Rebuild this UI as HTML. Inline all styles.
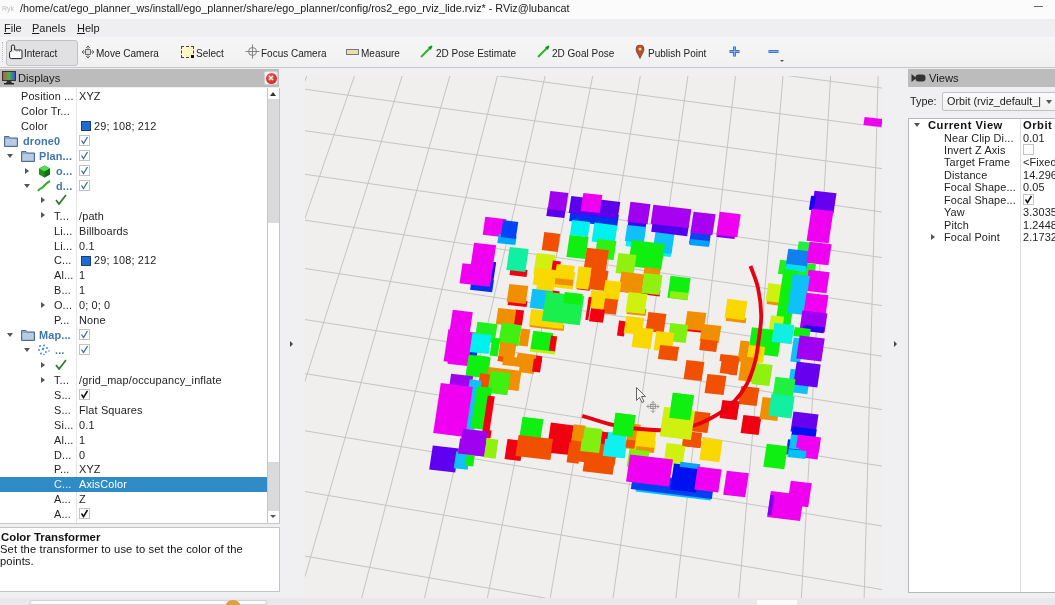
<!DOCTYPE html>
<html><head><meta charset="utf-8">
<style>
*{margin:0;padding:0;box-sizing:border-box}
html,body{width:1055px;height:605px;overflow:hidden;background:#f0eff2;font-family:"Liberation Sans",sans-serif;color:#1e1e1e}
.a{position:absolute}
.t{position:absolute;white-space:nowrap;font-size:10.5px;line-height:15px}
.tl{position:absolute;white-space:nowrap;font-size:10.9px;letter-spacing:.15px;line-height:15px;color:#232323}
.blue{color:#3f76b0;font-weight:bold}
.tb{position:absolute;top:46px;font-size:10px;line-height:15px;white-space:nowrap;color:#222}
.cb{position:absolute;width:11px;height:11px;border:1px solid #c3c3c3;background:#fff}
.vt{position:absolute;white-space:nowrap;font-size:10.9px;letter-spacing:.12px;line-height:12px;color:#232323}
.tri-d{width:0;height:0;border-left:3.5px solid transparent;border-right:3.5px solid transparent;border-top:4px solid #555}
.tri-r{width:0;height:0;border-top:3.5px solid transparent;border-bottom:3.5px solid transparent;border-left:4px solid #555}
#wrap{position:absolute;left:0;top:0;width:1055px;height:605px;will-change:transform}
</style></head><body><div id="wrap">
<!-- title -->
<div class="a" style="left:0;top:0;width:1055px;height:19px;background:#fbfbfb"></div>
<svg class="a" style="left:2px;top:3px" width="13" height="11" viewBox="0 0 13 11"><text x="0" y="8" font-size="7" fill="#bbb" font-family="Liberation Sans">Ryk</text></svg>
<div class="t" style="left:20px;top:1px;font-size:10.8px;line-height:14px;color:#1a1a1a">/home/cat/ego_planner_ws/install/ego_planner/share/ego_planner/config/ros2_ego_rviz_lide.rviz* - RViz@lubancat</div>
<div class="a" style="left:1034px;top:6px;width:9px;height:1.2px;background:#666"></div>
<!-- menu -->
<div class="a" style="left:0;top:19px;width:1055px;height:18px;background:#efeff1"></div>
<div class="t" style="left:4px;top:21px;font-size:11px;color:#1a1a1a"><u>F</u>ile</div>
<div class="t" style="left:32px;top:21px;font-size:11px;color:#1a1a1a"><u>P</u>anels</div>
<div class="t" style="left:77px;top:21px;font-size:11px;color:#1a1a1a"><u>H</u>elp</div>
<!-- toolbar -->
<div class="a" style="left:0;top:37px;width:1055px;height:31px;background:linear-gradient(#f6f6f7,#f1f1f2);border-bottom:1px solid #c6c6c9"></div>
<div class="a" style="left:2px;top:42px;width:1px;height:20px;border-left:1px dotted #bbb"></div>
<div class="a" style="left:6px;top:40px;width:72px;height:26px;background:#e1e1e3;border:1px solid #c2c2c4;border-radius:3px"></div>
<svg class="a" style="left:8px;top:44px" width="16" height="16" viewBox="0 0 16 16"><path d="M3.5,14.6H13Q14,14.6 14,13.6V7Q14,6 13,6H6.6V2.2Q6.6,1 5,1Q3.4,1 3.4,2.2V7.2Q1.6,7.2 1.6,8.6V13Q1.6,14.6 3.5,14.6Z" fill="#fff" stroke="#222" stroke-width="1"/><path d="M9,6.2V8M11.5,6.2V8" stroke="#888" stroke-width="0.8"/><path d="M5,2.2V8" stroke="#bbb" stroke-width="0.8"/></svg>
<div class="tb" style="left:24px">Interact</div>
<svg class="a" style="left:81px;top:45px" width="14" height="14" viewBox="0 0 14 14" fill="none" stroke="#666" stroke-width="0.9"><path d="M7 1v12M1 7h12M7 1l-2 2M7 1l2 2M7 13l-2-2M7 13l2-2M1 7l2-2M1 7l2 2M13 7l-2-2M13 7l-2 2"/><rect x="4.5" y="4.5" width="5" height="5" fill="#ddd"/></svg>
<div class="tb" style="left:96px">Move Camera</div>
<div class="a" style="left:181px;top:46px;width:13px;height:12px;background:#fdf7c4;border:1px dashed #444"></div>
<div class="a" style="left:191px;top:55px;width:3px;height:3px;background:#111"></div>
<div class="tb" style="left:196px">Select</div>
<svg class="a" style="left:245px;top:44px" width="15" height="15" viewBox="0 0 15 15" fill="none" stroke="#777" stroke-width="0.9"><circle cx="7.5" cy="7.5" r="4"/><path d="M7.5 0.5v14M0.5 7.5h14"/></svg>
<div class="tb" style="left:261px">Focus Camera</div>
<div class="a" style="left:346px;top:49px;width:13px;height:6px;background:#e8e0a8;border:1px solid #777"></div>
<div class="tb" style="left:361px">Measure</div>
<svg class="a" style="left:420px;top:45px" width="13" height="13" viewBox="0 0 13 13"><path d="M1 12L12 1" stroke="#2db82d" stroke-width="2.2"/><path d="M8 2l4-1-1 4" fill="#1a8a1a"/></svg>
<div class="tb" style="left:436px">2D Pose Estimate</div>
<svg class="a" style="left:537px;top:45px" width="13" height="13" viewBox="0 0 13 13"><path d="M1 12L12 1" stroke="#2db82d" stroke-width="2.2"/><path d="M8 2l4-1-1 4" fill="#1a8a1a"/></svg>
<div class="tb" style="left:552px">2D Goal Pose</div>
<svg class="a" style="left:635px;top:44px" width="10" height="15" viewBox="0 0 10 15"><path d="M5 14.5C3 10 1 8 1 5a4 4 0 0 1 8 0c0 3-2 5-4 9.5z" fill="#b5502a" stroke="#7a2e14" stroke-width="0.6"/><circle cx="5" cy="5" r="1.5" fill="#f3d8c8"/></svg>
<div class="tb" style="left:648px">Publish Point</div>
<svg class="a" style="left:728px;top:45px" width="13" height="13" viewBox="0 0 13 13"><path d="M6.5 1.5v10M1.5 6.5h10" stroke="#3b73c4" stroke-width="3"/><path d="M6.5 1.5v10M1.5 6.5h10" stroke="#7fb0ee" stroke-width="1.2"/></svg>
<svg class="a" style="left:767px;top:45px" width="13" height="13" viewBox="0 0 13 13"><path d="M1.5 6.5h10" stroke="#3b73c4" stroke-width="3"/><path d="M1.5 6.5h10" stroke="#7fb0ee" stroke-width="1.2"/></svg>
<div class="a tri-d" style="left:780px;top:60px;border-width:2.5px 2.5px 0 2.5px"></div>

<!-- displays panel -->
<div class="a" style="left:0;top:69px;width:279px;height:18px;background:#bcbcbc"></div>
<svg class="a" style="left:2px;top:71px" width="14" height="14" viewBox="0 0 14 14"><rect x="0.5" y="0.5" width="13" height="9" fill="url(#mon)" stroke="#333"/><defs><linearGradient id="mon"><stop offset="0" stop-color="#d44"/><stop offset=".5" stop-color="#4b4"/><stop offset="1" stop-color="#44d"/></linearGradient></defs><path d="M5 10h4l1 2h-6z" fill="#333"/><rect x="2" y="12" width="10" height="1.5" fill="#222"/></svg>
<div class="t" style="left:18px;top:70px;font-size:11.2px;line-height:16px;color:#1a1a1a">Displays</div>
<div class="a" style="left:264px;top:71px;width:14px;height:14px;background:#f4f4f4;border:1px solid #d0d0d0;border-radius:2px"></div>
<div class="a" style="left:265.5px;top:72.5px;width:11px;height:11px;border-radius:50%;background:radial-gradient(circle at 40% 35%,#f06060,#c01818)"></div>
<svg class="a" style="left:268px;top:75px" width="6" height="6" viewBox="0 0 6 6"><path d="M1 1l4 4M5 1l-4 4" stroke="#fff" stroke-width="1.2"/></svg>
<div class="a" style="left:0;top:88px;width:267px;height:435px;background:#fff"></div>
<div class="a" style="left:76px;top:88px;width:1px;height:435px;background:#e4e4e4"></div>
<div class="tl" style="left:21px;top:89.2px">Position ...</div>
<div class="tl" style="left:79px;top:89.2px">XYZ</div>
<div class="tl" style="left:21px;top:104.1px">Color Tr...</div>
<div class="tl" style="left:21px;top:119.1px">Color</div>
<div class="a" style="left:81px;top:121.3px;width:10px;height:10px;background:#1d6cd4;border:1px solid #1a3f70"></div>
<div class="tl" style="left:94px;top:119.1px">29; 108; 212</div>
<svg class="a" style="left:4px;top:134.7px" width="14" height="12" viewBox="0 0 14 12"><path d="M0.5 1.5h4.5l1.2 1.5h7.3v8.5h-13z" fill="#8fa7c7" stroke="#4f6a94" stroke-width="1"/><rect x="1.5" y="4" width="11" height="6.5" fill="#b9cbe3"/></svg>
<div class="tl blue" style="left:23px;top:134.0px">drone0</div>
<div class="cb" style="left:79px;top:135.2px"><svg width="9" height="9" viewBox="0 0 9 9" style="position:absolute;left:0;top:0"><path d="M1.5 4.5l2 3l4-6.5" stroke="#3a6ea5" stroke-width="1.3" fill="none"/></svg></div>
<div class="a tri-d" style="left:6.5px;top:154.1px"></div>
<svg class="a" style="left:21px;top:149.6px" width="14" height="12" viewBox="0 0 14 12"><path d="M0.5 1.5h4.5l1.2 1.5h7.3v8.5h-13z" fill="#8fa7c7" stroke="#4f6a94" stroke-width="1"/><rect x="1.5" y="4" width="11" height="6.5" fill="#b9cbe3"/></svg>
<div class="tl blue" style="left:39px;top:148.9px">Plan...</div>
<div class="cb" style="left:79px;top:150.1px"><svg width="9" height="9" viewBox="0 0 9 9" style="position:absolute;left:0;top:0"><path d="M1.5 4.5l2 3l4-6.5" stroke="#3a6ea5" stroke-width="1.3" fill="none"/></svg></div>
<div class="a tri-r" style="left:25px;top:167.6px"></div>
<svg class="a" style="left:38px;top:164.6px" width="13" height="13" viewBox="0 0 13 13"><path d="M6.5 0.5l5.5 3v6l-5.5 3l-5.5-3v-6z" fill="#1f8f1f"/><path d="M6.5 0.5l5.5 3l-5.5 3l-5.5-3z" fill="#4fe04f"/><path d="M6.5 6.5v6l5.5-3v-6z" fill="#137013"/></svg>
<div class="tl blue" style="left:56px;top:163.9px">o...</div>
<div class="cb" style="left:79px;top:165.1px"><svg width="9" height="9" viewBox="0 0 9 9" style="position:absolute;left:0;top:0"><path d="M1.5 4.5l2 3l4-6.5" stroke="#3a6ea5" stroke-width="1.3" fill="none"/></svg></div>
<div class="a tri-d" style="left:23.5px;top:184.0px"></div>
<svg class="a" style="left:37px;top:179.5px" width="14" height="12" viewBox="0 0 14 12"><path d="M1 11c2-3 3-2 5-4s3-4 7-6" stroke="#30b030" stroke-width="2" fill="none"/></svg>
<div class="tl blue" style="left:56px;top:178.8px">d...</div>
<div class="cb" style="left:79px;top:180.0px"><svg width="9" height="9" viewBox="0 0 9 9" style="position:absolute;left:0;top:0"><path d="M1.5 4.5l2 3l4-6.5" stroke="#3a6ea5" stroke-width="1.3" fill="none"/></svg></div>
<div class="a tri-r" style="left:41px;top:197.4px"></div>
<svg class="a" style="left:55px;top:194.4px" width="12" height="11" viewBox="0 0 12 11"><path d="M1 6l3 4l7-9" stroke="#2e7d32" stroke-width="1.8" fill="none"/></svg>
<div class="a tri-r" style="left:41px;top:212.3px"></div>
<div class="tl" style="left:54px;top:208.60000000000002px">T...</div>
<div class="tl" style="left:79px;top:208.60000000000002px">/path</div>
<div class="tl" style="left:54px;top:223.60000000000002px">Li...</div>
<div class="tl" style="left:79px;top:223.60000000000002px">Billboards</div>
<div class="tl" style="left:54px;top:238.5px">Li...</div>
<div class="tl" style="left:79px;top:238.5px">0.1</div>
<div class="tl" style="left:54px;top:253.4px">C...</div>
<div class="a" style="left:81px;top:255.6px;width:10px;height:10px;background:#1d6cd4;border:1px solid #1a3f70"></div>
<div class="tl" style="left:94px;top:253.4px">29; 108; 212</div>
<div class="tl" style="left:54px;top:268.40000000000003px">Al...</div>
<div class="tl" style="left:79px;top:268.40000000000003px">1</div>
<div class="tl" style="left:54px;top:283.3px">B...</div>
<div class="tl" style="left:79px;top:283.3px">1</div>
<div class="a tri-r" style="left:41px;top:301.9px"></div>
<div class="tl" style="left:54px;top:298.2px">O...</div>
<div class="tl" style="left:79px;top:298.2px">0; 0; 0</div>
<div class="tl" style="left:54px;top:313.2px">P...</div>
<div class="tl" style="left:79px;top:313.2px">None</div>
<div class="a tri-d" style="left:6.5px;top:333.3px"></div>
<svg class="a" style="left:21px;top:328.8px" width="14" height="12" viewBox="0 0 14 12"><path d="M0.5 1.5h4.5l1.2 1.5h7.3v8.5h-13z" fill="#8fa7c7" stroke="#4f6a94" stroke-width="1"/><rect x="1.5" y="4" width="11" height="6.5" fill="#b9cbe3"/></svg>
<div class="tl blue" style="left:39px;top:328.1px">Map...</div>
<div class="cb" style="left:79px;top:329.3px"><svg width="9" height="9" viewBox="0 0 9 9" style="position:absolute;left:0;top:0"><path d="M1.5 4.5l2 3l4-6.5" stroke="#3a6ea5" stroke-width="1.3" fill="none"/></svg></div>
<div class="a tri-d" style="left:23.5px;top:348.2px"></div>
<svg class="a" style="left:37px;top:343.7px" width="14" height="12" viewBox="0 0 14 12" fill="#4a8ad0"><circle cx="3" cy="2" r="1"/><circle cx="7" cy="1.5" r="1"/><circle cx="2" cy="6" r="1"/><circle cx="6" cy="5" r="1.2"/><circle cx="10" cy="4" r="1"/><circle cx="4" cy="9.5" r="1"/><circle cx="9" cy="8" r="1"/><circle cx="12" cy="7" r="0.8"/><circle cx="7" cy="10.5" r="0.8"/></svg>
<div class="tl blue" style="left:55px;top:343.0px">...</div>
<div class="cb" style="left:79px;top:344.2px"><svg width="9" height="9" viewBox="0 0 9 9" style="position:absolute;left:0;top:0"><path d="M1.5 4.5l2 3l4-6.5" stroke="#3a6ea5" stroke-width="1.3" fill="none"/></svg></div>
<div class="a tri-r" style="left:41px;top:361.6px"></div>
<svg class="a" style="left:55px;top:358.6px" width="12" height="11" viewBox="0 0 12 11"><path d="M1 6l3 4l7-9" stroke="#2e7d32" stroke-width="1.8" fill="none"/></svg>
<div class="a tri-r" style="left:41px;top:376.6px"></div>
<div class="tl" style="left:54px;top:372.90000000000003px">T...</div>
<div class="tl" style="left:79px;top:372.90000000000003px">/grid_map/occupancy_inflate</div>
<div class="tl" style="left:54px;top:387.8px">S...</div>
<div class="cb" style="left:79px;top:389.0px"><svg width="9" height="9" viewBox="0 0 9 9" style="position:absolute;left:0;top:0"><path d="M1.5 4.5l2 3l4-6.5" stroke="#111" stroke-width="1.5" fill="none"/></svg></div>
<div class="tl" style="left:54px;top:402.7px">S...</div>
<div class="tl" style="left:79px;top:402.7px">Flat Squares</div>
<div class="tl" style="left:54px;top:417.7px">Si...</div>
<div class="tl" style="left:79px;top:417.7px">0.1</div>
<div class="tl" style="left:54px;top:432.6px">Al...</div>
<div class="tl" style="left:79px;top:432.6px">1</div>
<div class="tl" style="left:54px;top:447.5px">D...</div>
<div class="tl" style="left:79px;top:447.5px">0</div>
<div class="tl" style="left:54px;top:462.40000000000003px">P...</div>
<div class="tl" style="left:79px;top:462.40000000000003px">XYZ</div>
<div class="a" style="left:0;top:476.6px;width:267px;height:15px;background:#308cc6"></div>
<div class="tl" style="left:54px;top:477.40000000000003px;color:#e8f2fa">C...</div>
<div class="tl" style="left:79px;top:477.40000000000003px;color:#fff">AxisColor</div>
<div class="tl" style="left:54px;top:492.3px">A...</div>
<div class="tl" style="left:79px;top:492.3px">Z</div>
<div class="tl" style="left:54px;top:507.2px">A...</div>
<div class="cb" style="left:79px;top:508.4px"><svg width="9" height="9" viewBox="0 0 9 9" style="position:absolute;left:0;top:0"><path d="M1.5 4.5l2 3l4-6.5" stroke="#111" stroke-width="1.5" fill="none"/></svg></div>

<div class="a" style="left:0;top:523px;width:280px;height:1px;background:#c8c8c8"></div>
<!-- scrollbar -->
<div class="a" style="left:267px;top:88px;width:13px;height:435px;background:#fff;border-left:1px solid #c4c4c4;border-right:1px solid #c4c4c4"></div>
<div class="a" style="left:268px;top:99px;width:11px;height:124px;background:#dadadc"></div>
<div class="a" style="left:268px;top:462px;width:11px;height:49px;background:#dadadc"></div>
<div class="a" style="left:270px;top:92px;width:0;height:0;border-style:solid;border-width:0 3.5px 4px 3.5px;border-color:transparent transparent #333 transparent"></div>
<div class="a tri-d" style="left:270px;top:515px;border-width:3.5px 3px 0 3px"></div>
<!-- description -->
<div class="a" style="left:0;top:527px;width:280px;height:65px;background:#fff;border:1px solid #c4c4c4;border-left:none"></div>
<div class="t" style="left:1px;top:531px;font-size:11.4px;line-height:12px;font-weight:bold;color:#111">Color Transformer</div>
<div class="t" style="left:0px;top:543px;font-size:11.2px;letter-spacing:.12px;line-height:12px;color:#111">Set the transformer to use to set the color of the</div>
<div class="t" style="left:0px;top:555px;font-size:11.2px;letter-spacing:.12px;line-height:12px;color:#111">points.</div>
<!-- splitters -->
<div class="a tri-r" style="left:290px;top:341px;border-width:3px 0 3px 3.5px;border-color:transparent transparent transparent #444"></div>
<div class="a tri-r" style="left:894px;top:341px;border-width:3px 0 3px 3.5px;border-color:transparent transparent transparent #444"></div>
<!-- 3d view -->
<div class="a" style="left:305px;top:76px;width:577px;height:522px;background:#f0efee;overflow:hidden">
<svg width="577" height="522" style="position:absolute;left:0;top:0">
<g stroke="#c4c4c4" stroke-width="1" fill="none">
<line x1="-208.3" y1="-281.0" x2="-682.7" y2="494.8"/>
<line x1="-171.3" y1="-276.8" x2="-626.5" y2="505.3"/>
<line x1="-134.0" y1="-272.4" x2="-569.8" y2="515.8"/>
<line x1="-96.5" y1="-268.1" x2="-512.5" y2="526.5"/>
<line x1="-58.7" y1="-263.7" x2="-454.6" y2="537.3"/>
<line x1="-20.8" y1="-259.3" x2="-396.2" y2="548.2"/>
<line x1="17.5" y1="-254.9" x2="-337.2" y2="559.2"/>
<line x1="55.9" y1="-250.4" x2="-277.7" y2="570.3"/>
<line x1="94.6" y1="-246.0" x2="-217.5" y2="581.5"/>
<line x1="133.5" y1="-241.5" x2="-156.8" y2="592.9"/>
<line x1="172.7" y1="-236.9" x2="-95.4" y2="604.3"/>
<line x1="212.1" y1="-232.4" x2="-33.4" y2="615.9"/>
<line x1="251.7" y1="-227.8" x2="29.2" y2="627.6"/>
<line x1="291.6" y1="-223.1" x2="92.4" y2="639.3"/>
<line x1="331.8" y1="-218.5" x2="156.3" y2="651.3"/>
<line x1="372.2" y1="-213.8" x2="220.8" y2="663.3"/>
<line x1="412.9" y1="-209.1" x2="286.0" y2="675.5"/>
<line x1="453.8" y1="-204.4" x2="351.9" y2="687.7"/>
<line x1="495.0" y1="-199.6" x2="418.5" y2="700.2"/>
<line x1="536.5" y1="-194.8" x2="485.7" y2="712.7"/>
<line x1="578.2" y1="-190.0" x2="553.7" y2="725.4"/>
<line x1="620.2" y1="-185.1" x2="622.4" y2="738.2"/>
<line x1="662.4" y1="-180.2" x2="691.8" y2="751.1"/>
<line x1="705.0" y1="-175.3" x2="762.0" y2="764.2"/>
<line x1="747.8" y1="-170.3" x2="832.9" y2="777.5"/>
<line x1="790.9" y1="-165.3" x2="904.5" y2="790.8"/>
<line x1="-208.3" y1="-281.0" x2="834.3" y2="-160.3"/>
<line x1="-224.5" y1="-254.6" x2="838.9" y2="-129.0"/>
<line x1="-241.3" y1="-227.1" x2="843.7" y2="-96.3"/>
<line x1="-258.8" y1="-198.5" x2="848.8" y2="-62.2"/>
<line x1="-277.0" y1="-168.7" x2="854.1" y2="-26.5"/>
<line x1="-296.0" y1="-137.6" x2="859.6" y2="10.8"/>
<line x1="-315.8" y1="-105.2" x2="865.4" y2="49.9"/>
<line x1="-336.5" y1="-71.4" x2="871.5" y2="91.0"/>
<line x1="-358.2" y1="-36.0" x2="877.8" y2="134.0"/>
<line x1="-380.8" y1="1.1" x2="884.5" y2="179.3"/>
<line x1="-404.6" y1="39.9" x2="891.6" y2="227.0"/>
<line x1="-429.4" y1="80.6" x2="899.0" y2="277.3"/>
<line x1="-455.6" y1="123.3" x2="906.9" y2="330.3"/>
<line x1="-483.0" y1="168.2" x2="915.2" y2="386.4"/>
<line x1="-511.9" y1="215.5" x2="924.0" y2="445.8"/>
<line x1="-542.4" y1="265.3" x2="933.3" y2="508.8"/>
<line x1="-574.6" y1="317.9" x2="943.2" y2="575.8"/>
<line x1="-608.5" y1="373.5" x2="953.7" y2="647.0"/>
<line x1="-644.5" y1="432.4" x2="965.0" y2="723.1"/>
</g>
<polygon fill="#f000f0" points="559.6,40.9 577.6,43.1 576.4,51.1 558.4,48.9"/>
<polygon fill="#5c00ec" points="242.7,130.9 260.7,133.1 259.3,142.1 241.3,139.9"/>
<polygon fill="#a000f0" points="245.3,114.9 263.4,117.1 260.6,135.1 242.7,132.9"/>
<polygon fill="#f000f0" points="180.3,140.7 201.3,143.3 198.7,161.3 177.7,158.7"/>
<polygon fill="#00a8ff" points="193.7,157.9 211.7,160.1 210.3,169.1 192.3,166.9"/>
<polygon fill="#0044f8" points="198.3,144.1 213.3,145.9 210.7,162.9 195.7,161.1"/>
<polygon fill="#f05000" points="239.3,156.0 255.3,158.0 252.7,176.0 236.7,174.0"/>
<polygon fill="#0030f0" points="265.9,133.1 313.9,138.9 312.1,150.9 264.1,145.1"/>
<polygon fill="#00f0f0" points="267.1,143.9 285.1,146.1 282.9,161.1 264.9,158.9"/>
<polygon fill="#00f0f0" points="289.4,146.6 312.4,149.4 309.6,168.4 286.6,165.6"/>
<polygon fill="#5c00ec" points="266.3,120.1 315.3,125.9 312.7,142.9 263.7,137.1"/>
<polygon fill="#f000f0" points="278.4,116.9 297.4,119.1 294.6,137.1 275.6,134.9"/>
<polygon fill="#10f010" points="264.6,158.9 283.6,161.1 280.4,183.1 261.4,180.9"/>
<polygon fill="#30f010" points="292.4,162.9 311.4,165.1 308.6,184.1 289.6,181.9"/>
<polygon fill="#f05000" points="281.9,171.7 303.9,174.3 300.1,199.3 278.1,196.7"/>
<polygon fill="#f05000" points="287.3,195.5 296.3,196.5 293.7,213.5 284.7,212.5"/>
<polygon fill="#3010f0" points="323.5,143.9 341.5,146.1 340.5,153.1 322.5,150.9"/>
<polygon fill="#a000f0" points="325.5,125.8 345.5,128.2 342.5,148.2 322.5,145.8"/>
<polygon fill="#00f0f0" points="321.5,163.0 337.5,165.0 336.5,172.0 320.5,170.0"/>
<polygon fill="#10c0f8" points="322.2,148.9 341.2,151.1 338.8,167.1 319.8,164.9"/>
<polygon fill="#00f0f0" points="349.4,173.0 366.4,175.0 365.6,181.0 348.6,179.0"/>
<polygon fill="#10c0f8" points="350.5,155.9 369.5,158.1 366.5,178.1 347.5,175.9"/>
<polygon fill="#5000f0" points="347.8,144.8 383.8,149.2 382.2,160.2 346.2,155.8"/>
<polygon fill="#a800f0" points="348.4,128.7 386.4,133.3 383.6,152.3 345.6,147.7"/>
<polygon fill="#1040f0" points="386.0,154.8 406.0,157.2 404.0,170.2 384.0,167.8"/>
<polygon fill="#00a0ff" points="385.4,162.9 404.4,165.1 403.6,171.1 384.6,168.9"/>
<polygon fill="#a800f0" points="388.6,135.7 410.6,138.3 407.4,159.3 385.4,156.7"/>
<polygon fill="#8000f0" points="412.5,153.9 430.5,156.1 429.5,163.1 411.5,160.9"/>
<polygon fill="#f000f0" points="414.7,135.7 435.7,138.3 432.3,161.3 411.3,158.7"/>
<polygon fill="#10f010" points="326.9,164.0 359.9,168.0 356.1,194.0 323.1,190.0"/>
<polygon fill="#90f010" points="313.5,176.9 331.5,179.1 328.5,199.1 310.5,196.9"/>
<polygon fill="#f09000" points="339.5,191.0 355.5,193.0 354.5,200.0 338.5,198.0"/>
<polygon fill="#6800f0" points="509.5,114.7 531.5,117.3 528.5,137.3 506.5,134.7"/>
<polygon fill="#2000f0" points="506.1,119.7 511.1,120.3 508.9,134.3 503.9,133.7"/>
<polygon fill="#f000f0" points="506.4,132.7 528.4,135.3 523.6,167.3 501.6,164.7"/>
<polygon fill="#20f040" points="493.8,165.2 507.8,166.8 506.2,176.8 492.2,175.2"/>
<polygon fill="#20f020" points="475.1,183.8 511.1,188.2 508.9,202.2 472.9,197.8"/>
<polygon fill="#1080f0" points="483.3,172.7 504.3,175.3 501.7,192.3 480.7,189.7"/>
<polygon fill="#00e0f0" points="481.4,187.8 501.4,190.2 500.6,196.2 480.6,193.8"/>
<polygon fill="#f000f0" points="504.6,165.7 526.6,168.3 523.4,189.3 501.4,186.7"/>
<polygon fill="#f000f0" points="503.6,193.7 524.6,196.3 521.4,217.3 500.4,214.7"/>
<polygon fill="#2000f0" points="186.2,185.7 191.2,186.3 186.8,215.3 181.8,214.7"/>
<polygon fill="#0030f0" points="166.9,201.7 188.9,204.3 187.1,216.3 165.1,213.7"/>
<polygon fill="#f000f0" points="169.1,166.7 191.1,169.3 184.9,210.3 162.9,207.7"/>
<polygon fill="#f000f0" points="157.5,187.2 187.5,190.8 184.5,210.8 154.5,207.2"/>
<polygon fill="#f00010" points="205.5,192.0 222.5,194.0 221.5,201.0 204.5,199.0"/>
<polygon fill="#10f0a0" points="204.7,170.9 223.7,173.1 220.3,196.1 201.3,193.9"/>
<polygon fill="#d0f010" points="231.6,176.9 250.6,179.1 247.4,200.1 228.4,197.9"/>
<polygon fill="#f00010" points="247.9,184.5 255.9,185.5 254.1,197.5 246.1,196.5"/>
<polygon fill="#f8d800" points="230.3,191.6 270.3,196.4 267.7,213.4 227.7,208.6"/>
<polygon fill="#f09000" points="250.4,201.9 268.4,204.1 267.6,210.1 249.6,207.9"/>
<polygon fill="#f8d800" points="232.9,202.0 249.9,204.0 248.1,216.0 231.1,214.0"/>
<polygon fill="#f8d800" points="251.8,187.9 269.8,190.1 268.2,200.1 250.2,197.9"/>
<polygon fill="#f00010" points="272.4,207.2 285.4,208.8 284.6,214.8 271.6,213.2"/>
<polygon fill="#f8d800" points="273.6,190.2 286.6,191.8 283.4,213.8 270.4,212.2"/>
<polygon fill="#f00010" points="247.7,214.6 254.7,215.4 253.3,224.4 246.3,223.6"/>
<polygon fill="#f05000" points="286.5,193.0 303.5,195.0 300.5,215.0 283.5,213.0"/>
<polygon fill="#f00010" points="315.4,209.6 355.4,214.4 354.6,220.4 314.6,215.6"/>
<polygon fill="#f09000" points="316.5,195.6 339.5,198.4 336.5,218.4 313.5,215.6"/>
<polygon fill="#90f010" points="339.5,196.9 357.5,199.1 354.5,219.1 336.5,216.9"/>
<polygon fill="#10f010" points="365.6,199.8 385.6,202.2 382.4,224.2 362.4,221.8"/>
<polygon fill="#90f010" points="365.5,214.9 383.5,217.1 382.5,224.1 364.5,221.9"/>
<polygon fill="#f8d800" points="300.4,204.0 316.4,206.0 313.6,225.0 297.6,223.0"/>
<polygon fill="#f8d800" points="286.4,214.0 303.4,216.0 300.6,234.0 283.6,232.0"/>
<polygon fill="#f05000" points="300.1,222.2 313.1,223.8 310.9,238.8 297.9,237.2"/>
<polygon fill="#f00010" points="286.0,232.2 300.0,233.8 298.0,246.8 284.0,245.2"/>
<polygon fill="#f09000" points="322.5,230.9 341.5,233.1 340.5,240.1 321.5,237.9"/>
<polygon fill="#d0f010" points="323.5,215.9 342.5,218.1 339.5,238.1 320.5,235.9"/>
<polygon fill="#f00010" points="203.4,222.9 222.4,225.1 221.6,231.1 202.6,228.9"/>
<polygon fill="#f09000" points="204.3,207.9 223.3,210.1 220.7,228.1 201.7,225.9"/>
<polygon fill="#10c0f8" points="227.4,212.8 247.4,215.2 244.6,234.2 224.6,231.8"/>
<polygon fill="#f00010" points="283.7,220.8 286.7,221.2 283.3,244.2 280.3,243.8"/>
<polygon fill="#f09000" points="225.4,245.0 259.4,249.0 258.6,255.0 224.6,251.0"/>
<polygon fill="#f8d800" points="226.2,233.0 260.2,237.0 257.8,253.0 223.8,249.0"/>
<polygon fill="#19f050" points="241.2,215.7 279.2,220.3 274.8,249.3 236.8,244.7"/>
<polygon fill="#10f010" points="259.8,215.9 277.8,218.1 276.2,229.1 258.2,226.9"/>
<polygon fill="#f00010" points="210.1,233.5 219.1,234.5 216.9,249.5 207.9,248.5"/>
<polygon fill="#f09000" points="193.2,231.9 211.2,234.1 208.8,250.1 190.8,247.9"/>
<polygon fill="#f09000" points="462.4,222.1 477.4,223.9 476.6,229.9 461.6,228.1"/>
<polygon fill="#d0f010" points="463.4,207.1 478.4,208.9 475.6,226.9 460.6,225.1"/>
<polygon fill="#f09000" points="421.4,239.8 441.4,242.2 440.6,247.2 420.6,244.8"/>
<polygon fill="#f8d800" points="422.4,222.8 442.4,225.2 439.6,244.2 419.6,241.8"/>
<polygon fill="#f00010" points="381.3,250.9 400.3,253.1 399.7,257.1 380.7,254.9"/>
<polygon fill="#f09000" points="382.4,234.9 401.4,237.1 398.6,255.1 379.6,252.9"/>
<polygon fill="#f09000" points="397.3,247.9 416.3,250.1 413.7,267.1 394.7,264.9"/>
<polygon fill="#f05000" points="395.8,263.0 412.8,265.0 411.2,276.0 394.2,274.0"/>
<polygon fill="#f05000" points="343.4,235.9 361.4,238.1 358.6,257.1 340.6,254.9"/>
<polygon fill="#f00010" points="314.1,244.6 321.1,245.4 318.9,260.4 311.9,259.6"/>
<polygon fill="#f8d800" points="321.3,239.9 339.3,242.1 336.7,259.1 318.7,256.9"/>
<polygon fill="#f8d800" points="329.5,250.9 348.5,253.1 345.5,273.1 326.5,270.9"/>
<polygon fill="#80f010" points="365.4,246.9 383.4,249.1 380.6,267.1 362.6,264.9"/>
<polygon fill="#f8d800" points="351.4,254.9 369.4,257.1 366.6,276.1 348.6,273.9"/>
<polygon fill="#f05000" points="355.1,268.9 374.1,271.1 371.9,285.1 352.9,282.9"/>
<polygon fill="#f05000" points="415.5,277.9 433.5,280.1 432.5,287.1 414.5,284.9"/>
<polygon fill="#10f010" points="478.6,193.1 493.6,194.9 484.4,255.9 469.4,254.1"/>
<polygon fill="#10c0f8" points="487.9,198.0 504.9,200.0 499.1,239.0 482.1,237.0"/>
<polygon fill="#f000f0" points="501.5,216.7 523.5,219.3 520.5,239.3 498.5,236.7"/>
<polygon fill="#a000f0" points="497.4,234.5 522.4,237.5 519.6,256.5 494.6,253.5"/>
<polygon fill="#3000f0" points="498.4,248.7 519.5,251.3 518.5,257.3 497.6,254.7"/>
<polygon fill="#d0f010" points="466.1,239.2 479.1,240.8 476.9,255.8 463.9,254.2"/>
<polygon fill="#10f010" points="489.7,251.0 505.7,253.0 504.3,262.0 488.3,260.0"/>
<polygon fill="#10f010" points="446.9,251.2 476.9,254.8 473.1,280.8 443.1,277.2"/>
<polygon fill="#10f0e0" points="469.4,246.8 489.4,249.2 486.6,268.2 466.6,265.8"/>
<polygon fill="#f09000" points="435.6,264.5 444.6,265.5 441.4,286.5 432.4,285.5"/>
<polygon fill="#f8d800" points="444.2,269.0 460.2,271.0 457.8,287.0 441.8,285.0"/>
<polygon fill="#10c0f8" points="488.8,261.4 498.8,262.6 495.2,286.6 485.2,285.4"/>
<polygon fill="#a000f0" points="494.7,259.5 519.7,262.5 516.3,285.5 491.3,282.5"/>
<polygon fill="#f000f0" points="143.4,253.3 171.4,256.7 166.6,288.7 138.6,285.3"/>
<polygon fill="#f000f0" points="147.8,233.8 167.8,236.2 164.2,260.2 144.2,257.8"/>
<polygon fill="#0030f0" points="166.1,270.6 173.1,271.4 170.9,286.4 163.9,285.6"/>
<polygon fill="#20f020" points="172.4,245.8 192.4,248.2 189.6,267.2 169.6,264.8"/>
<polygon fill="#00f0f0" points="167.4,256.9 186.4,259.1 183.6,278.1 164.6,275.9"/>
<polygon fill="#40f010" points="196.6,246.8 216.6,249.2 213.4,270.2 193.4,267.8"/>
<polygon fill="#10f010" points="187.3,261.5 195.3,262.5 192.7,280.5 184.7,279.5"/>
<polygon fill="#f09000" points="216.3,252.5 225.3,253.5 222.7,270.5 213.7,269.5"/>
<polygon fill="#f09000" points="195.4,266.0 211.4,268.0 208.6,287.0 192.6,285.0"/>
<polygon fill="#c0f010" points="227.3,258.5 252.3,261.5 249.7,278.5 224.7,275.5"/>
<polygon fill="#10f010" points="228.3,254.8 248.3,257.2 245.7,275.2 225.7,272.8"/>
<polygon fill="#f00010" points="246.1,259.6 252.1,260.4 249.9,275.4 243.9,274.6"/>
<polygon fill="#f09000" points="212.6,276.8 232.6,279.2 231.4,287.2 211.4,284.8"/>
<polygon fill="#f00010" points="231.4,279.6 237.4,280.4 236.6,286.4 230.6,285.6"/>
<polygon fill="#10f010" points="172.4,279.3 183.4,280.7 182.6,286.7 171.6,285.3"/>
<polygon fill="#f000f0" points="143.6,279.7 165.6,282.3 164.4,290.3 142.4,287.7"/>
<polygon fill="#10f010" points="163.5,279.7 185.5,282.3 182.5,302.3 160.5,299.7"/>
<polygon fill="#10f010" points="164.5,278.7 185.5,281.3 182.5,301.3 161.5,298.7"/>
<polygon fill="#f05000" points="193.4,280.1 208.4,281.9 207.6,286.9 192.6,285.1"/>
<polygon fill="#f09000" points="198.7,279.9 216.7,282.1 215.3,291.1 197.3,288.9"/>
<polygon fill="#f09000" points="216.2,280.1 231.2,281.9 228.8,297.9 213.8,296.1"/>
<polygon fill="#f00010" points="229.0,282.5 237.0,283.5 235.0,296.5 227.0,295.5"/>
<polygon fill="#f09000" points="183.5,291.0 216.5,295.0 213.5,315.0 180.5,311.0"/>
<polygon fill="#f05000" points="175.1,297.3 187.1,298.7 184.9,312.7 172.9,311.3"/>
<polygon fill="#40f010" points="185.7,294.8 205.7,297.2 202.3,319.2 182.3,316.8"/>
<polygon fill="#a000f0" points="146.1,297.7 168.1,300.3 165.9,315.3 143.9,312.7"/>
<polygon fill="#10c0f8" points="164.7,303.3 176.7,304.7 169.3,353.7 157.3,352.3"/>
<polygon fill="#10f010" points="172.2,310.1 187.2,311.9 180.8,353.9 165.8,352.1"/>
<polygon fill="#f00010" points="182.8,319.6 189.8,320.4 184.2,357.4 177.2,356.6"/>
<polygon fill="#f000f0" points="135.8,307.1 167.8,310.9 160.2,360.9 128.2,357.1"/>
<polygon fill="#f00010" points="178.6,353.5 186.6,354.5 185.4,362.5 177.4,361.5"/>
<polygon fill="#a000f0" points="157.9,352.5 182.9,355.5 179.1,380.5 154.1,377.5"/>
<polygon fill="#90f010" points="181.4,362.3 193.4,363.7 190.6,382.7 178.6,381.3"/>
<polygon fill="#10f010" points="217.5,340.7 238.5,343.3 235.5,363.3 214.5,360.7"/>
<polygon fill="#f00010" points="245.9,346.6 268.9,349.4 265.1,374.4 242.1,371.6"/>
<polygon fill="#f00010" points="202.5,363.0 218.5,365.0 215.5,385.0 199.5,383.0"/>
<polygon fill="#f05000" points="213.6,358.9 248.6,363.1 245.4,384.1 210.4,379.9"/>
<polygon fill="#f09000" points="268.8,348.3 280.8,349.7 277.2,373.7 265.2,372.3"/>
<polygon fill="#80f010" points="279.8,351.0 296.8,353.0 293.2,377.0 276.2,375.0"/>
<polygon fill="#f00010" points="248.1,362.9 267.1,365.1 264.9,379.1 245.9,376.9"/>
<polygon fill="#f05000" points="264.5,366.3 276.5,367.7 273.5,387.7 261.5,386.3"/>
<polygon fill="#f05000" points="381.4,283.9 399.4,286.1 396.6,305.1 378.6,302.9"/>
<polygon fill="#f05000" points="417.3,280.0 434.3,282.0 431.7,299.0 414.7,297.0"/>
<polygon fill="#f05000" points="402.4,297.9 421.4,300.1 418.6,319.1 399.6,316.9"/>
<polygon fill="#f09000" points="436.8,280.2 450.8,281.8 447.2,305.8 433.2,304.2"/>
<polygon fill="#f05000" points="426.4,280.5 434.4,281.5 431.6,299.5 423.6,298.5"/>
<polygon fill="#90f010" points="449.6,286.9 467.6,289.1 464.4,310.1 446.4,307.9"/>
<polygon fill="#f05000" points="436.4,309.9 454.4,312.1 451.6,330.1 433.6,327.9"/>
<polygon fill="#f05000" points="436.3,310.4 446.3,311.6 443.7,328.6 433.7,327.4"/>
<polygon fill="#f00010" points="426.4,324.5 434.4,325.5 431.6,343.5 423.6,342.5"/>
<polygon fill="#f00010" points="417.4,324.0 434.4,326.0 431.6,344.0 414.6,342.0"/>
<polygon fill="#f00010" points="438.4,338.9 456.4,341.1 453.6,359.1 435.6,356.9"/>
<polygon fill="#d0f010" points="359.2,331.1 390.2,334.9 385.8,363.9 354.8,360.1"/>
<polygon fill="#f05000" points="387.5,334.9 405.5,337.1 402.5,357.1 384.5,354.9"/>
<polygon fill="#10f010" points="367.9,316.7 388.9,319.3 385.1,344.3 364.1,341.7"/>
<polygon fill="#f05000" points="379.1,354.9 397.1,357.1 394.9,372.1 376.9,369.9"/>
<polygon fill="#f8d800" points="397.6,361.8 417.6,364.2 414.4,386.2 394.4,383.8"/>
<polygon fill="#10f010" points="310.6,336.8 330.6,339.2 327.4,361.2 307.4,358.8"/>
<polygon fill="#f09000" points="323.9,347.3 335.9,348.7 332.1,373.7 320.1,372.3"/>
<polygon fill="#f8d800" points="332.6,351.9 351.6,354.1 348.4,376.1 329.4,373.9"/>
<polygon fill="#10f0f0" points="301.8,355.8 321.8,358.2 318.2,382.2 298.2,379.8"/>
<polygon fill="#80f010" points="286.4,353.3 298.4,354.7 295.6,373.7 283.6,372.3"/>
<polygon fill="#f00010" points="297.3,355.6 303.3,356.4 300.7,373.4 294.7,372.6"/>
<polygon fill="#d0f010" points="361.6,366.9 380.6,369.1 377.4,390.1 358.4,387.9"/>
<polygon fill="#f05000" points="378.5,362.9 396.5,365.1 395.5,372.1 377.5,369.9"/>
<polygon fill="#10c0f8" points="485.7,292.8 505.7,295.2 502.3,318.2 482.3,315.8"/>
<polygon fill="#6800f0" points="491.7,285.6 515.7,288.4 512.3,311.4 488.3,308.6"/>
<polygon fill="#20f040" points="470.5,300.8 490.5,303.2 487.5,323.2 467.5,320.8"/>
<polygon fill="#f09000" points="457.6,320.9 475.6,323.1 472.4,345.1 454.4,342.9"/>
<polygon fill="#10f0a0" points="466.6,317.6 489.6,320.4 486.4,342.4 463.4,339.6"/>
<polygon fill="#f000f0" points="492.4,362.6 515.4,365.4 512.6,383.4 489.6,380.6"/>
<polygon fill="#0020f0" points="483.1,363.3 495.1,364.7 492.9,379.7 480.9,378.3"/>
<polygon fill="#00c0f8" points="483.6,372.9 501.6,375.1 500.4,383.1 482.4,380.9"/>
<polygon fill="#6800f0" points="488.5,335.5 513.5,338.5 510.5,358.5 485.5,355.5"/>
<polygon fill="#0010f0" points="487.8,350.6 511.8,353.4 510.2,363.4 486.2,360.6"/>
<polygon fill="#10c0f8" points="486.1,358.4 496.1,359.6 493.9,373.6 483.9,372.4"/>
<polygon fill="#f000f0" points="493.0,358.6 516.0,361.4 514.0,374.4 491.0,371.6"/>
<polygon fill="#10f010" points="461.7,367.7 482.7,370.3 479.3,393.3 458.3,390.7"/>
<polygon fill="#6000f0" points="127.8,369.4 153.8,372.6 150.2,396.6 124.2,393.4"/>
<polygon fill="#10c0f8" points="151.3,375.2 165.3,376.8 162.7,393.8 148.7,392.2"/>
<polygon fill="#10f010" points="161.8,378.5 169.8,379.5 168.2,390.5 160.2,389.5"/>
<polygon fill="#a000f0" points="155.1,362.4 181.1,365.6 178.9,380.6 152.9,377.4"/>
<polygon fill="#f05000" points="266.5,364.2 312.5,369.8 309.5,389.8 263.5,384.2"/>
<polygon fill="#f05000" points="280.4,377.2 310.4,380.8 307.6,398.8 277.6,395.2"/>
<polygon fill="#80f010" points="276.9,362.9 295.9,365.1 294.1,377.1 275.1,374.9"/>
<polygon fill="#10f0f0" points="300.3,362.7 322.3,365.3 319.7,382.3 297.7,379.7"/>
<polygon fill="#f05000" points="321.6,363.4 331.6,364.6 330.4,372.6 320.4,371.4"/>
<polygon fill="#f8d800" points="330.8,362.8 350.8,365.2 349.2,376.2 329.2,373.8"/>
<polygon fill="#f09000" points="331.4,369.9 349.4,372.1 348.6,377.1 330.6,374.9"/>
<polygon fill="#80f010" points="324.4,372.8 344.4,375.2 341.6,393.2 321.6,390.8"/>
<polygon fill="#00c0f8" points="331.4,410.5 406.4,419.5 405.6,424.5 330.6,415.5"/>
<polygon fill="#0040f0" points="328.2,397.1 409.2,406.9 406.8,422.9 325.8,413.1"/>
<polygon fill="#f000f0" points="325.0,378.4 368.0,383.6 364.0,410.6 321.0,405.4"/>
<polygon fill="#0010f0" points="368.9,387.4 394.9,390.6 391.1,416.6 365.1,413.4"/>
<polygon fill="#10a0f8" points="375.4,385.8 395.4,388.2 394.6,393.2 374.6,390.8"/>
<polygon fill="#f000f0" points="392.7,390.6 416.7,393.4 413.3,416.4 389.3,413.6"/>
<polygon fill="#f000f0" points="421.8,394.7 443.8,397.3 440.2,421.3 418.2,418.7"/>
<polygon fill="#f000f0" points="485.8,404.7 506.8,407.3 503.2,431.3 482.2,428.7"/>
<polygon fill="#f000f0" points="465.9,415.0 498.9,419.0 495.1,445.0 462.1,441.0"/>
<polygon fill="#8000f0" points="465.5,418.8 469.5,419.2 466.5,439.2 462.5,438.8"/>
<path d="M277.3,339.7 C282.5,341.3 299.1,347.0 308.7,349.2 C318.3,351.4 325.3,352.2 335.0,353.0 C344.7,353.8 357.7,354.7 367.1,354.0 C376.5,353.3 383.6,351.5 391.5,348.7 C399.4,345.9 407.9,341.2 414.3,337.3 C420.6,333.4 425.0,329.9 429.6,325.1 C434.2,320.3 438.3,314.9 441.7,308.4 C445.1,301.9 448.0,293.7 450.0,286.0 C452.0,278.3 452.9,270.1 453.9,262.4 C454.9,254.7 456.3,248.0 456.2,239.6 C456.1,231.3 454.9,220.6 453.1,212.3 C451.3,204.0 446.8,193.7 445.5,190.0" stroke="#e60012" stroke-width="3.8" fill="none" stroke-linecap="butt"/>
<polygon fill="#10f010" points="310.6,336.8 330.6,339.2 327.4,361.2 307.4,358.8"/>
<polygon fill="#d0f010" points="359.2,331.1 390.2,334.9 385.8,363.9 354.8,360.1"/>
<polygon fill="#10f010" points="367.9,316.7 388.9,319.3 385.1,344.3 364.1,341.7"/>
<path transform="translate(331.5,311.5)" d="M0,0 L0,13 L3,10 L5.5,15 L7.5,14 L5,9 L9,9 Z" fill="#f4f4f4" stroke="#555" stroke-width="0.9"/>
<g transform="translate(348.0,330.5)" fill="none" stroke="#888" stroke-width="0.8"><path d="M-6,0H6M0,-5V6M-6,0l2,-2M-6,0l2,2M6,0l-2,-2M6,0l-2,2M0,-5l-2,2M0,-5l2,2M0,6l-2,-2M0,6l2,-2"/><rect x="-2.5" y="-2" width="5" height="4"/></g>
</svg></div>
<!-- views panel -->
<div class="a" style="left:908px;top:69px;width:147px;height:18px;background:#bcbcbc"></div>
<svg class="a" style="left:911px;top:73px" width="15" height="10" viewBox="0 0 15 10"><path d="M0.5 1l5 4l-5 4z" fill="#333"/><rect x="4.5" y="1.5" width="10" height="7" rx="3" fill="#333"/></svg>
<div class="t" style="left:929px;top:70px;font-size:11.2px;line-height:16px;color:#1a1a1a">Views</div>
<div class="t" style="left:910px;top:94px;font-size:10.8px;color:#1a1a1a">Type:</div>
<div class="a" style="left:942px;top:92px;width:120px;height:19px;background:linear-gradient(#fbfbfb,#f1f1f1);border:1px solid #c0c0c0;border-radius:2px"></div>
<div class="t" style="left:947px;top:94px;font-size:10.8px;color:#1a1a1a">Orbit (rviz_default_|</div>
<div class="a tri-d" style="left:1046px;top:100px"></div>
<div class="a" style="left:908px;top:118px;width:147px;height:475px;background:#fff;border:1px solid #b8b8b8;border-right:none"></div>
<div class="a" style="left:1020px;top:119px;width:1px;height:473px;background:#dcdcdc"></div>
<div class="a tri-d" style="left:914px;top:123px"></div>
<div class="vt" style="left:928px;top:119px;font-weight:bold;color:#111;font-size:11.2px;letter-spacing:.5px">Current View</div>
<div class="vt" style="left:1023px;top:119px;font-weight:bold;color:#111;font-size:11.2px;letter-spacing:.5px">Orbit</div>
<div class="vt" style="left:944px;top:131.5px">Near Clip Di...</div>
<div class="vt" style="left:1023px;top:131.5px">0.01</div>
<div class="vt" style="left:944px;top:143.9px">Invert Z Axis</div>
<div class="cb" style="left:1023px;top:143.9px"></div>
<div class="vt" style="left:944px;top:156.4px">Target Frame</div>
<div class="vt" style="left:1023px;top:156.4px">&lt;Fixed</div>
<div class="vt" style="left:944px;top:168.8px">Distance</div>
<div class="vt" style="left:1023px;top:168.8px">14.296</div>
<div class="vt" style="left:944px;top:181.3px">Focal Shape...</div>
<div class="vt" style="left:1023px;top:181.3px">0.05</div>
<div class="vt" style="left:944px;top:193.8px">Focal Shape...</div>
<div class="cb" style="left:1023px;top:193.8px"><svg width="9" height="9" viewBox="0 0 9 9" style="position:absolute;left:0;top:0"><path d="M1.5 4.5l2 3l4-6.5" stroke="#111" stroke-width="1.5" fill="none"/></svg></div>
<div class="vt" style="left:944px;top:206.2px">Yaw</div>
<div class="vt" style="left:1023px;top:206.2px">3.3035</div>
<div class="vt" style="left:944px;top:218.6px">Pitch</div>
<div class="vt" style="left:1023px;top:218.6px">1.2448</div>
<div class="vt" style="left:944px;top:231.1px">Focal Point</div>
<div class="vt" style="left:1023px;top:231.1px">2.1732</div>
<div class="a tri-r" style="left:931px;top:233.6px"></div>
<!-- bottom strip -->
<div class="a" style="left:0;top:598px;width:1055px;height:7px;background:#e9e9eb"></div>
<div class="a" style="left:30px;top:600px;width:237px;height:5px;background:#fbfbfb;border:1px solid #d4d4d4"></div>
<div class="a" style="left:757px;top:600px;width:40px;height:5px;background:#fbfbfb"></div>
<div class="a" style="left:226px;top:600px;width:14px;height:10px;border-radius:50%;background:#e0a040"></div>
</div></body></html>
